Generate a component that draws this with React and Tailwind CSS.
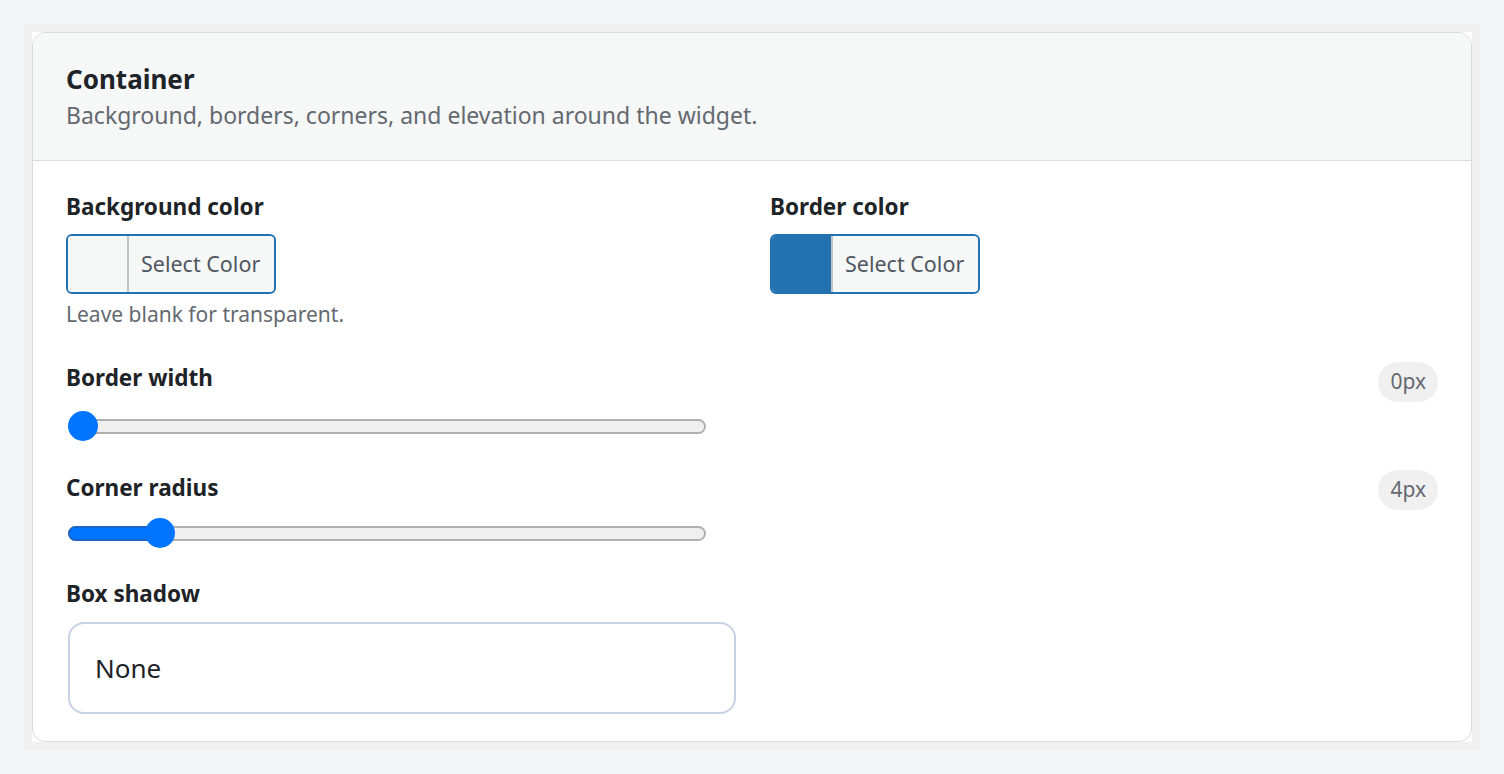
import React from "react";

function Slider({ value }) {
  return (
    <div className="relative ml-[2px] flex h-[30px] w-[638px] items-center">
      <div className="relative h-[15px] w-full rounded-full border-2 border-[#b0b0b0] bg-[#efefef]">
        {value > 0 && (
          <div
            className="absolute left-[-2px] top-[-2px] h-[15px] rounded-full border-2 border-[#1b63c6] bg-[#0075ff]"
            style={{ width: `calc(${value * 100}% + 8px)` }}
          />
        )}
      </div>
      <div
        className="absolute top-0 h-[30px] w-[30px] -translate-x-1/2 rounded-full bg-[#0075ff]"
        style={{ left: `calc(15px + ${value} * (100% - 30px))` }}
      />
    </div>
  );
}

function ColorButton({ blank }) {
  return (
    <button
      type="button"
      className="flex h-[60px] w-[210px] overflow-hidden rounded-[6px] border-2 border-[#2271b1] bg-[#f6f7f7] p-0 text-left"
    >
      <span
        className={
          blank
            ? "h-full w-[61px] shrink-0 border-r-2 border-[#c3c4c7] bg-[#f6f7f7]"
            : "h-full w-[61px] shrink-0 border-r-2 border-[#c3c4c7] bg-[#2271b1]"
        }
      />
      <span className="flex h-full flex-1 items-center pl-[12px] text-[21.5px] text-[#50575e]">
        Select Color
      </span>
    </button>
  );
}

function Label({ children }) {
  return <div className="text-[22.5px] font-bold leading-[28px] text-[#1d2327]">{children}</div>;
}

export default function App() {
  return (
    <div
      className="min-h-screen bg-[#f4f5f7] p-6"
      style={{ fontFamily: '"Noto Sans", "Open Sans", sans-serif' }}
    >
      <div className="bg-[#f0f0f1] p-2">
        <div className="bg-white">
          <div className="overflow-hidden rounded-[13px] border border-[#dcdcde]">
            <div className="border-b border-[#dcdcde] bg-[#f6f7f7] px-[33px] pb-[30px] pt-[30px]">
              <h2 className="text-[26px] font-bold leading-[32px] text-[#1d2327]">Container</h2>
              <p className="mt-[5px] text-[23px] leading-[30px] text-[#646970]">
                Background, borders, corners, and elevation around the widget.
              </p>
            </div>
            <div className="px-[33px] pb-[27px] pt-[32px]">
              <div className="grid grid-cols-2 gap-x-[36px]">
                <div>
                  <Label>Background color</Label>
                  <div className="mt-[13px]">
                    <ColorButton blank />
                  </div>
                  <div className="mt-[7px] text-[21px] leading-[26px] text-[#646970]">
                    Leave blank for transparent.
                  </div>
                </div>
                <div>
                  <Label>Border color</Label>
                  <div className="mt-[13px]">
                    <ColorButton />
                  </div>
                </div>
              </div>

              <div className="mt-[37px]">
                <div className="flex items-start justify-between">
                  <Label>Border width</Label>
                  <span className="-mb-[10px] -mt-[2px] flex h-[40px] items-center rounded-full bg-[#f0f0f1] px-[12px] text-[21px] text-[#646970]">
                    0px
                  </span>
                </div>
                <div className="mt-[19px]">
                  <Slider value={0} />
                </div>
              </div>

              <div className="mt-[33px]">
                <div className="flex items-start justify-between">
                  <Label>Corner radius</Label>
                  <span className="-mb-[8px] -mt-[4px] flex h-[40px] items-center rounded-full bg-[#f0f0f1] px-[12px] text-[21px] text-[#646970]">
                    4px
                  </span>
                </div>
                <div className="mt-[16px]">
                  <Slider value={0.1266} />
                </div>
              </div>

              <div className="mt-[32px]">
                <Label>Box shadow</Label>
                <div className="ml-[2px] mt-[14px] flex h-[92px] w-[668px] items-center rounded-[16px] border-2 border-[#c5d2e6] bg-white pl-[25px] text-[26px] text-[#1d2327]">
                  None
                </div>
              </div>
            </div>
          </div>
        </div>
      </div>
    </div>
  );
}
